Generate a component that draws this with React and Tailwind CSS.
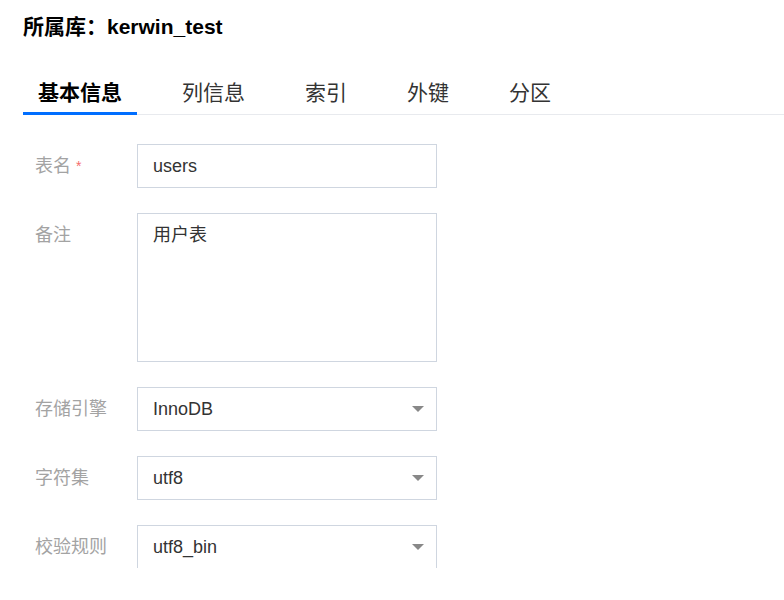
import React from 'react';

const tabs = ['基本信息', '列信息', '索引', '外键', '分区'];

function Caret() {
  return (
    <svg width="12" height="6" viewBox="0 0 12 6" className="shrink-0">
      <path d="M0 0 L12 0 L6 6 Z" fill="#888888" />
    </svg>
  );
}

function Label({ children, required }) {
  return (
    <div className="w-[102px] shrink-0 text-[18px] leading-[44px] text-[#a3a3a3] flex items-start">
      <span>{children}</span>
      {required && <span className="ml-[5px] text-[14px] leading-[44px] text-[#f56c6c]">*</span>}
    </div>
  );
}

function Select({ value }) {
  return (
    <div className="w-[300px] h-[44px] border border-[#cfd6e0] flex items-center justify-between pl-[15px] pr-[12px] text-[18px] text-[#333]">
      <span>{value}</span>
      <Caret />
    </div>
  );
}

export default function App() {
  return (
    <div
      className="w-[784px] h-[600px] bg-white overflow-hidden"
      style={{ fontFamily: '"Liberation Sans", "Noto Sans CJK SC", sans-serif' }}
    >
      <div className="h-[568px] overflow-hidden">
        {/* 标题 */}
        <div className="pt-[13px] px-[23px] text-[21px] leading-[28px] font-bold text-black">
          所属库：kerwin_test
        </div>

        {/* Tabs */}
        <div className="ml-[23px] mt-[38px] flex gap-[30px] border-b border-[#e8eaee]">
          {tabs.map((t, i) => (
            <div
              key={t}
              className={
                i === 0
                  ? 'px-[15px] pb-[5px] text-[21px] leading-[28px] font-bold text-black border-b-[3px] border-[#006eff] -mb-px'
                  : 'px-[15px] pb-[5px] text-[21px] leading-[28px] text-[#333] border-b-[3px] border-transparent -mb-px'
              }
            >
              {t}
            </div>
          ))}
        </div>

        {/* 表单 */}
        <div className="mt-[29px] pl-[35px]">
          <div className="flex mb-[25px]">
            <Label required>表名</Label>
            <div className="w-[300px] h-[44px] border border-[#cfd6e0] flex items-center px-[15px] text-[18px] text-[#333]">
              users
            </div>
          </div>

          <div className="flex mb-[25px]">
            <Label>备注</Label>
            <div className="w-[300px] h-[149px] border border-[#cfd6e0] px-[15px] pt-[9px] text-[18px] leading-[24px] text-[#333]">
              用户表
            </div>
          </div>

          <div className="flex mb-[25px]">
            <Label>存储引擎</Label>
            <Select value="InnoDB" />
          </div>

          <div className="flex mb-[25px]">
            <Label>字符集</Label>
            <Select value="utf8" />
          </div>

          <div className="flex mb-[25px]">
            <Label>校验规则</Label>
            <Select value="utf8_bin" />
          </div>
        </div>
      </div>
    </div>
  );
}
